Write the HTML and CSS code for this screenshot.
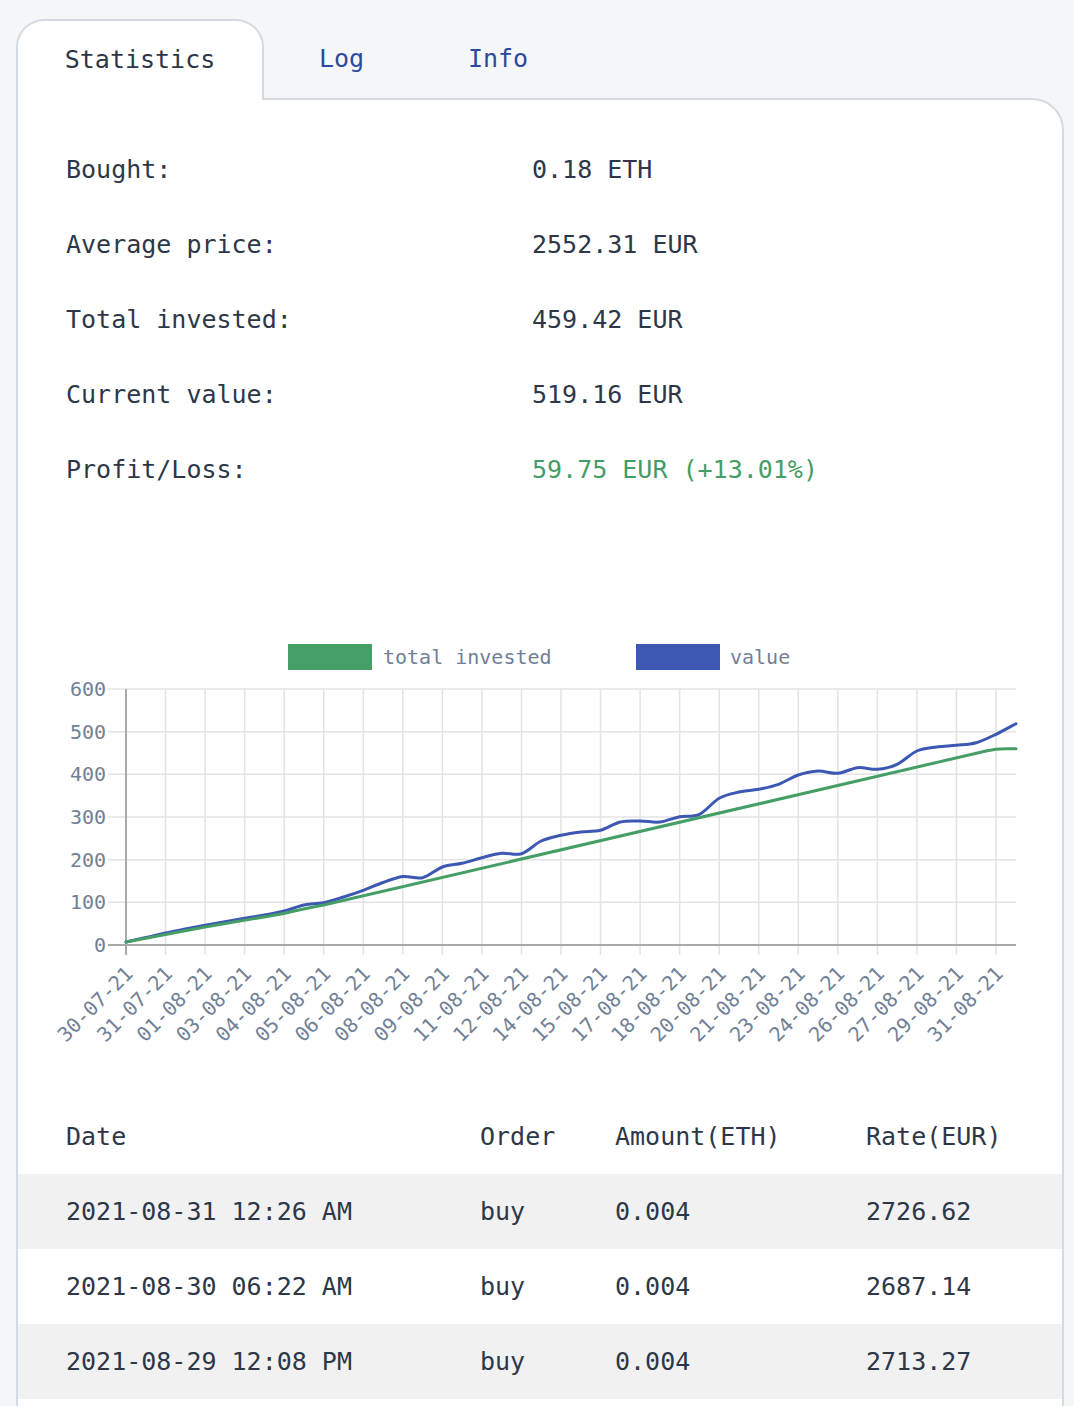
FILE: index.html
```html
<!DOCTYPE html>
<html lang="en">
<head>
<meta charset="utf-8">
<title>Statistics</title>
<link rel="stylesheet" href="styles.css">
</head>
<body>
<div class="wrap">
  <nav class="tabs">
    <div class="tab tab-active">Statistics</div>
    <div class="tab tab-log">Log</div>
    <div class="tab tab-info">Info</div>
  </nav>
  <section class="card">
    <div class="stats">
      <div class="stat-label">Bought:</div><div class="stat-value">0.18 ETH</div>
      <div class="stat-label">Average price:</div><div class="stat-value">2552.31 EUR</div>
      <div class="stat-label">Total invested:</div><div class="stat-value">459.42 EUR</div>
      <div class="stat-label">Current value:</div><div class="stat-value">519.16 EUR</div>
      <div class="stat-label">Profit/Loss:</div><div class="stat-value positive">59.75 EUR (+13.01%)</div>
    </div>

    <svg class="chart" width="1044" height="478" viewBox="18 620 1044 478" xmlns="http://www.w3.org/2000/svg">
      <g class="legend">
        <rect x="288" y="643" width="84" height="26" fill="#469e67"/>
        <text x="383" y="663">total invested</text>
        <rect x="636" y="643" width="84" height="26" fill="#3c58b2"/>
        <text x="730" y="663">value</text>
      </g>
      <g class="grid" stroke="#e3e3e3" stroke-width="1.5">
        <line x1="108" y1="688" x2="1016" y2="688"/>
        <line x1="108" y1="730.7" x2="1016" y2="730.7"/>
        <line x1="108" y1="773.3" x2="1016" y2="773.3"/>
        <line x1="108" y1="816" x2="1016" y2="816"/>
        <line x1="108" y1="858.7" x2="1016" y2="858.7"/>
        <line x1="108" y1="901.3" x2="1016" y2="901.3"/>
        <line x1="165.5" y1="688" x2="165.5" y2="954"/>
        <line x1="205.1" y1="688" x2="205.1" y2="954"/>
        <line x1="244.6" y1="688" x2="244.6" y2="954"/>
        <line x1="284.2" y1="688" x2="284.2" y2="954"/>
        <line x1="323.7" y1="688" x2="323.7" y2="954"/>
        <line x1="363.3" y1="688" x2="363.3" y2="954"/>
        <line x1="402.8" y1="688" x2="402.8" y2="954"/>
        <line x1="442.4" y1="688" x2="442.4" y2="954"/>
        <line x1="481.9" y1="688" x2="481.9" y2="954"/>
        <line x1="521.5" y1="688" x2="521.5" y2="954"/>
        <line x1="561" y1="688" x2="561" y2="954"/>
        <line x1="600.5" y1="688" x2="600.5" y2="954"/>
        <line x1="640.1" y1="688" x2="640.1" y2="954"/>
        <line x1="679.6" y1="688" x2="679.6" y2="954"/>
        <line x1="719.2" y1="688" x2="719.2" y2="954"/>
        <line x1="758.7" y1="688" x2="758.7" y2="954"/>
        <line x1="798.3" y1="688" x2="798.3" y2="954"/>
        <line x1="837.8" y1="688" x2="837.8" y2="954"/>
        <line x1="877.4" y1="688" x2="877.4" y2="954"/>
        <line x1="916.9" y1="688" x2="916.9" y2="954"/>
        <line x1="956.4" y1="688" x2="956.4" y2="954"/>
        <line x1="996" y1="688" x2="996" y2="954"/>
      </g>
      <g class="axis" stroke="#a9a9a9" stroke-width="2">
        <line x1="126" y1="688" x2="126" y2="954"/>
        <line x1="108" y1="944" x2="1016" y2="944"/>
      </g>
      <g class="ylabels">
        <text x="106" y="695">600</text>
        <text x="106" y="738">500</text>
        <text x="106" y="780">400</text>
        <text x="106" y="823">300</text>
        <text x="106" y="866">200</text>
        <text x="106" y="908">100</text>
        <text x="106" y="951">0</text>
      </g>
      <g class="xlabels">
        <text transform="translate(134 974) rotate(-45)">30-07-21</text>
        <text transform="translate(173.5 974) rotate(-45)">31-07-21</text>
        <text transform="translate(213.1 974) rotate(-45)">01-08-21</text>
        <text transform="translate(252.6 974) rotate(-45)">03-08-21</text>
        <text transform="translate(292.2 974) rotate(-45)">04-08-21</text>
        <text transform="translate(331.7 974) rotate(-45)">05-08-21</text>
        <text transform="translate(371.3 974) rotate(-45)">06-08-21</text>
        <text transform="translate(410.8 974) rotate(-45)">08-08-21</text>
        <text transform="translate(450.4 974) rotate(-45)">09-08-21</text>
        <text transform="translate(489.9 974) rotate(-45)">11-08-21</text>
        <text transform="translate(529.5 974) rotate(-45)">12-08-21</text>
        <text transform="translate(569 974) rotate(-45)">14-08-21</text>
        <text transform="translate(608.5 974) rotate(-45)">15-08-21</text>
        <text transform="translate(648.1 974) rotate(-45)">17-08-21</text>
        <text transform="translate(687.6 974) rotate(-45)">18-08-21</text>
        <text transform="translate(727.2 974) rotate(-45)">20-08-21</text>
        <text transform="translate(766.7 974) rotate(-45)">21-08-21</text>
        <text transform="translate(806.3 974) rotate(-45)">23-08-21</text>
        <text transform="translate(845.8 974) rotate(-45)">24-08-21</text>
        <text transform="translate(885.4 974) rotate(-45)">26-08-21</text>
        <text transform="translate(924.9 974) rotate(-45)">27-08-21</text>
        <text transform="translate(964.4 974) rotate(-45)">29-08-21</text>
        <text transform="translate(1004 974) rotate(-45)">31-08-21</text>
      </g>
      <path class="line" stroke="#3c58b2" d="M126 941 C132.6 939.5 139.2 938 145.8 936.5 S158.9 933.42 165.5 932 S178.7 929.28 185.3 928 S198.5 925.5 205.1 924.3 S218.2 921.97 224.8 920.8 S238 918.43 244.6 917.3 S257.8 915.22 264.4 914 S277.6 911.67 284.2 910 S297.4 905.38 304 904 S317.1 903.03 323.7 901.7 S336.9 898.07 343.5 896 S356.7 891.72 363.3 889.3 S376.4 883.8 383 881.5 S396.2 876.3 402.8 875.5 S416 878.28 422.6 876.7 S435.8 868.4 442.4 866 S455.5 863.85 462.1 862.3 S475.3 858.37 481.9 856.7 S495.1 852.97 501.7 852.3 S514.9 854.75 521.5 852.7 S534.6 843.07 541.2 840 S554.4 835.8 561 834.3 S574.2 831.83 580.8 831 S593.9 830.97 600.5 829.3 S613.7 822.55 620.3 821 S633.5 820 640.1 820 S653.3 821.72 659.9 821 S673 816.98 679.6 815.7 S692.8 816.37 699.4 813.3 S712.6 801.02 719.2 797.3 S732.4 792.5 739 791 S752.1 789.58 758.7 788.3 S771.9 785.68 778.5 783.3 S791.7 776.22 798.3 774 S811.4 770.28 818 770 S831.2 772.85 837.8 772.3 S851 767.37 857.6 766.7 S870.8 768.87 877.4 768.3 S890.5 766.35 897.1 763.3 S910.3 752.88 916.9 750 S930.1 746.95 936.7 746 S949.8 745.02 956.4 744.3 S969.6 743.53 976.2 741.7 S989.4 736.47 996 733.3 S1009.4 726.23 1016 722.7"/>
      <path class="line" stroke="#469e67" d="M126 941 L205 926 L284 912.5 Q300 908.5 323.7 904 L986 750 Q996 747.7 1006 747.7 L1016 747.7"/>
    </svg>

    <div class="table">
      <div class="trow thead">
        <div>Date</div><div>Order</div><div>Amount(ETH)</div><div>Rate(EUR)</div>
      </div>
      <div class="trow striped">
        <div>2021-08-31 12:26 AM</div><div>buy</div><div>0.004</div><div>2726.62</div>
      </div>
      <div class="trow">
        <div>2021-08-30 06:22 AM</div><div>buy</div><div>0.004</div><div>2687.14</div>
      </div>
      <div class="trow striped">
        <div>2021-08-29 12:08 PM</div><div>buy</div><div>0.004</div><div>2713.27</div>
      </div>
    </div>
  </section>
</div>
</body>
</html>
```

FILE: styles.css
```css
* {
  box-sizing: border-box;
}

body {
  margin: 0;
  background: #f5f6f8;
  font-family: "DejaVu Sans Mono", "Liberation Mono", monospace;
  font-size: 25px;
  color: #2d3748;
}

.wrap {
  padding: 19px 0 0 16px;
  width: 1064px;
}

.tabs {
  display: flex;
  height: 79px;
  position: relative;
  z-index: 2;
}

.tab {
  display: flex;
  align-items: center;
  justify-content: center;
  height: 79px;
  color: #2b49a0;
}

.tab-active {
  width: 248px;
  height: 81px;
  padding-bottom: 2px;
  background: #ffffff;
  border: 2px solid #d5d9e0;
  border-bottom: none;
  border-radius: 28px 28px 0 0;
  color: #2d3748;
}

.tab-log {
  width: 155px;
}

.tab-info {
  width: 158px;
}

.card {
  background: #ffffff;
  border: 2px solid #d5d9e0;
  border-radius: 0 32px 0 0;
  padding-bottom: 60px;
}

.stats {
  display: grid;
  grid-template-columns: 466px 1fr;
  padding: 32px 0 0 48px;
}

.stat-label,
.stat-value {
  height: 75px;
  line-height: 75px;
}

.positive {
  color: #459d66;
}

.chart {
  display: block;
  margin-top: 114px;
}

.chart text {
  font-family: "DejaVu Sans Mono", "Liberation Mono", monospace;
  font-size: 20px;
  fill: #718096;
}

.ylabels text {
  text-anchor: end;
}

.xlabels text {
  text-anchor: end;
}

.line {
  fill: none;
  stroke-width: 3;
  stroke-linejoin: round;
  stroke-linecap: round;
}

.trow {
  display: grid;
  grid-template-columns: 414px 135px 251px 1fr;
  padding-left: 48px;
  height: 75px;
  align-items: center;
}

.striped {
  background: #f1f1f1;
}
```
